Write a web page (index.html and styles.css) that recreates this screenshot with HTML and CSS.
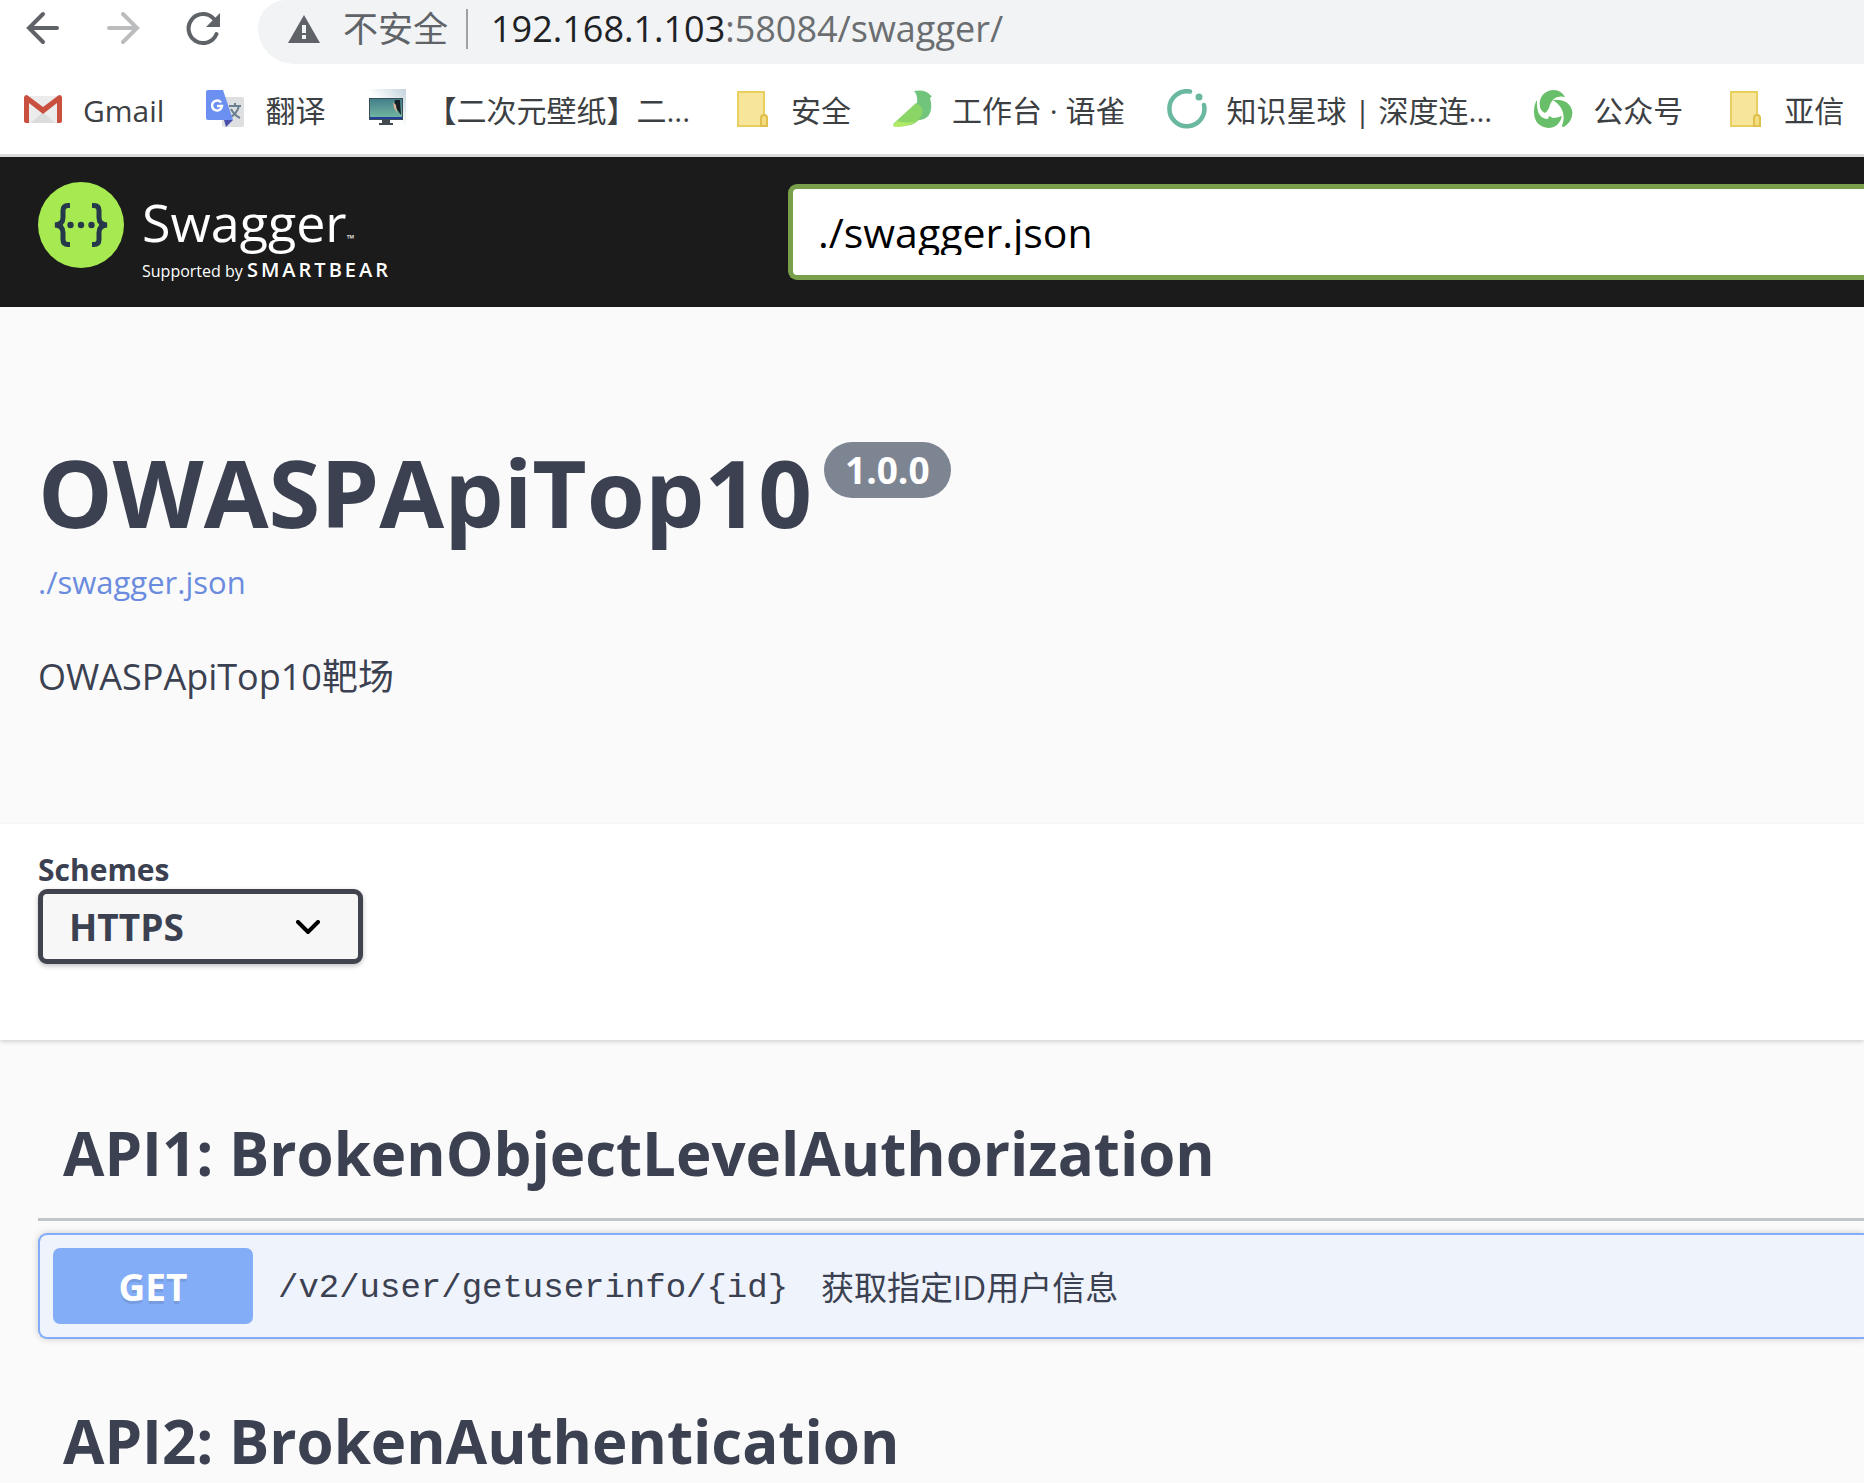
FILE: index.html
```html
<!DOCTYPE html>
<html lang="zh-CN">
<head>
<meta charset="utf-8">
<title>Swagger UI</title>
<meta name="viewport" content="width=device-width, initial-scale=1">
<link rel="stylesheet" href="styles.css">
</head>
<body>
<header class="browser">
  <div class="toolbar">
    <button class="nav-button" type="button" aria-label="后退">
      <svg viewBox="0 0 36 36"><path d="M32 18H4M18 4L4 18l14 14"/></svg>
    </button>
    <button class="nav-button nav-button-off" type="button" aria-label="前进">
      <svg viewBox="0 0 36 36"><path d="M4 18h28M18 4l14 14-14 14"/></svg>
    </button>
    <button class="nav-button" type="button" aria-label="刷新">
      <svg viewBox="0 0 36 36"><path d="M31.500 24A14.500 14.500 0 1 1 29 9"/><path class="solid" d="M35 3v14H21z"/></svg>
    </button>
    <div class="address">
      <svg class="warning" viewBox="0 0 32 28"><path fill="#5f6368" d="M16 0l16 28H0z"/><path fill="#f1f3f4" d="M14 10h4v8h-4zM14 20h4v4h-4z"/></svg>
      <span class="insecure">不安全</span>
      <span class="url"><span class="host">192.168.1.103</span>:58084/swagger/</span>
    </div>
  </div>
  <nav class="bookmarks" aria-label="书签">
    <a href="#gmail">
      <svg viewBox="0 0 40 40"><path fill="#ececec" d="M3 7h34v27H3z"/><path fill="#dcdcdc" d="M8 34l12-11 12 11z"/><path fill="#c9503f" d="M1 9q0-3 3-3l16 12L36 6q3 0 3 3v23q0 2-2 2h-3V14L20 25 6 14v20H3q-2 0-2-2z"/></svg>
      <span>Gmail</span>
    </a>
    <a href="#translate">
      <svg viewBox="0 0 40 40"><rect x="17" y="8" width="22" height="30" rx="2" fill="#dedfe1"/><path d="M24 17h12M30 14v3M34 17q-2 8-10 12M26 20q3 6 9 9" fill="none" stroke="#6a7f90" stroke-width="2"/><path fill="#4751ad" d="M19 31h9l-7 7z"/><path fill="#6b90f2" d="M3 1h15l10 30H3q-2 0-2-2V3q0-2 2-2z"/><path d="M16 13.500A5 5 0 1 0 17 17h-5" fill="none" stroke="#fff" stroke-width="2.500"/></svg>
      <span>翻译</span>
    </a>
    <a href="#wallpaper">
      <svg viewBox="0 0 40 40"><defs><linearGradient id="sky" x1="0" x2="1" y1="1" y2="0"><stop offset=".5" stop-color="#fff"/><stop offset="1" stop-color="#c3d3dc"/></linearGradient><linearGradient id="sea" x2="0" y2="1"><stop stop-color="#427f8a"/><stop offset="1" stop-color="#70b4a0"/></linearGradient></defs><path fill="url(#sky)" d="M0 0h40v40H0z"/><path fill="#3b4d58" d="M3 9h34v22H3z"/><path fill="url(#sea)" d="M4 10h32v18H4z"/><path fill="#233d9b" d="M4 28h32v2H4z"/><path fill="#172027" d="M29 11h5l1 15-5-7-2-3z"/><path fill="#d6b59b" d="M27 13l3 3 1 8-3-5z"/><path fill="#444b50" d="M16 31h8v3h3v2H13v-2h3z"/></svg>
      <span>【二次元壁纸】二...</span>
    </a>
    <a href="#security">
      <svg viewBox="0 0 40 40"><path d="M7 3h26v23q3 0 3 4v7H7z" fill="#f7e59b" stroke="#e9cf60" stroke-width="2"/><path d="M30 37v-8q0-3 3-3t3 3v8z" fill="#f4dc80" stroke="#e0c04c" stroke-width="2"/></svg>
      <span>安全</span>
    </a>
    <a href="#yuque">
      <svg viewBox="0 0 40 40"><path fill="#70c47b" d="M22 2q12-2 16 4l2 1-2 2q3 10-1 17-4 6-14 5l-6-9 8-8q1-8-3-12z"/><path fill="#8ad565" d="M24 14q9 4 6 12-6 12-20 11l-9-2z"/><path fill="#b3e969" d="M1 36l4-4q10 3 19 0-9 6-19 6-4 0-4-2z"/></svg>
      <span>工作台 · 语雀</span>
    </a>
    <a href="#zsxq">
      <svg viewBox="0 0 40 40"><path d="M23 2.500A17.500 17.500 0 1 0 37 16" fill="none" stroke="#6bb8a0" stroke-width="4.500" stroke-linecap="round"/><circle cx="32" cy="8" r="3.500" fill="#6bb8a0"/></svg>
      <span>知识星球 | 深度连...</span>
    </a>
    <a href="#mp">
      <svg viewBox="0 0 40 40"><path fill="#69bf69" d="M7 18C5 8 12 1 21 1q7 0 11 7-13-3-16 11-2 4-4 5-4-2-5-6z"/><path fill="#69bf69" d="M20 11q15-2 19 10 2 10-8 17-2 0-2-1 6-16-9-26z"/><path fill="#69bf69" d="M4 11q-1 19 11 19l1-3 4 2q4 0 9-2-3 12-14 12Q1 37 1 23 1 15 4 11z"/></svg>
      <span>公众号</span>
    </a>
    <a href="#asiainfo">
      <svg viewBox="0 0 40 40"><path d="M7 3h26v23q3 0 3 4v7H7z" fill="#f7e59b" stroke="#e9cf60" stroke-width="2"/><path d="M30 37v-8q0-3 3-3t3 3v8z" fill="#f4dc80" stroke="#e0c04c" stroke-width="2"/></svg>
      <span>亚信</span>
    </a>
  </nav>
</header>

<div class="topbar">
  <a class="brand" href="#top">
    <svg class="brand-mark" viewBox="0 0 86 86"><circle cx="43" cy="43" r="43" fill="#a7e951"/><g fill="none" stroke="#25394a" stroke-width="5"><path d="M32 23.500h-2q-5 0-5 5v7q0 7-8 7.500 8 .5 8 7.500v7q0 5 5 5h2"/><path d="M54 23.500h2q5 0 5 5v7q0 7 8 7.500-8 .5-8 7.500v7q0 5-5 5h-2"/></g><g fill="#25394a"><circle cx="32.500" cy="43" r="3.200"/><circle cx="43" cy="43" r="3.200"/><circle cx="53.500" cy="43" r="3.200"/></g></svg>
    <span class="brand-text">
      <span class="brand-name">Swagger<small>™</small></span>
      <span class="brand-sub">Supported by <b>SMARTBEAR</b></span>
    </span>
  </a>
  <div class="spec-url">
    <input type="text" value="./swagger.json" aria-label="Specification URL">
  </div>
</div>

<main>
  <section class="info">
    <h1 class="title">OWASPApiTop10 <span class="version">1.0.0</span></h1>
    <a class="spec-link" href="./swagger.json">./swagger.json</a>
    <p class="description">OWASPApiTop10靶场</p>
  </section>

  <section class="schemes">
    <label for="scheme">Schemes</label>
    <div class="select">
      <select id="scheme"><option>HTTPS</option></select>
      <svg viewBox="0 0 24 14"><path d="M2 2l10 10L22 2" fill="none" stroke="#000" stroke-width="4" stroke-linecap="round"/></svg>
    </div>
  </section>

  <section class="tag">
    <h2>API1: BrokenObjectLevelAuthorization</h2>
    <div class="operation">
      <button class="method" type="button">GET</button>
      <span class="path">/v2/user/getuserinfo/{id}</span>
      <span class="summary">获取指定ID用户信息</span>
    </div>
  </section>
  <section class="tag">
    <h2>API2: BrokenAuthentication</h2>
  </section>
</main>
</body>
</html>
```

FILE: styles.css
```css
* { box-sizing: border-box; }

body {
  margin: 0;
  height: 100vh;
  overflow: hidden;
  background: #fafafa;
  color: #3b4151;
  font-family: "Open Sans", "Noto Sans CJK SC", sans-serif;
}

a { text-decoration: none; }

h1, h2, p { margin: 0; }

/* Browser chrome */
.browser {
  background: #fff;
  border-bottom: 3px solid #dadbdd;
}

.toolbar {
  display: flex;
  align-items: flex-start;
  gap: 44px;
  padding-left: 25px;
  height: 64px;
}

.nav-button {
  width: 36px;
  height: 36px;
  margin-top: 10px;
  padding: 0;
  border: 0;
  background: none;
}

.nav-button svg { display: block; }

.nav-button path {
  fill: none;
  stroke: #5f6368;
  stroke-width: 4;
  stroke-linecap: round;
}

.nav-button .solid {
  fill: #5f6368;
  stroke: none;
}

.nav-button-off path { stroke: #babcbe; }

.address {
  display: flex;
  flex: 1;
  align-items: center;
  height: 64px;
  margin-left: -7px;
  padding: 0 0 6px 30px;
  border-radius: 28px 0 0 36px;
  background: #f1f3f4;
  color: #6b6e71;
  font-size: 36px;
  line-height: 40px;
}

.warning {
  width: 32px;
  height: 28px;
  margin-right: 23px;
}

.insecure {
  padding-right: 18px;
  border-right: 2px solid #9fa2a5;
  color: #5f6368;
  font-size: 35px;
}

.url { padding-left: 23px; }

.host { color: #202124; }

.bookmarks {
  display: flex;
  gap: 41px;
  height: 90px;
  padding: 25px 0 0 23px;
  overflow: hidden;
}

.bookmarks a {
  display: flex;
  flex: none;
  gap: 20px;
  color: #3c4043;
  font-size: 30px;
  line-height: 44px;
  white-space: nowrap;
}

.bookmarks svg {
  width: 40px;
  height: 40px;
}

/* Swagger top bar */
.topbar {
  display: flex;
  align-items: flex-start;
  height: 150px;
  padding: 25px 0 0 38px;
  background: #1b1b1b;
}

.brand {
  display: flex;
  flex: 0 0 750px;
  gap: 18px;
  color: #fff;
}

.brand-mark {
  width: 86px;
  height: 86px;
}

.brand-text {
  display: flex;
  flex-direction: column;
  gap: 7px;
  padding-top: 10px;
}

.brand-name {
  font-size: 52px;
  line-height: 60px;
}

.brand-name small {
  font-size: 10px;
  line-height: 10px;
}

.brand-sub {
  font-size: 16px;
  line-height: 24px;
}

.brand-sub b {
  font-size: 20px;
  font-weight: 600;
  letter-spacing: 3px;
  line-height: 20px;
}

.spec-url {
  flex: 1;
  min-width: 0;
  height: 96px;
  margin-top: 2px;
  padding: 20px 0 20px 25px;
  border: 5px solid #7a9f4b;
  border-right: 0;
  border-radius: 9px 0 0 9px;
  background: #fff;
}

.spec-url input {
  display: block;
  width: 100%;
  height: 46px;
  padding: 0;
  border: 0;
  outline: 0;
  overflow: hidden;
  background: none;
  color: #000;
  font: 41px/46px "Open Sans", sans-serif;
  contain: paint;
}

/* API description */
.info {
  padding: 135px 38px 122px;
}

.title {
  display: flex;
  align-items: flex-start;
  gap: 12px;
  font-size: 94px;
  line-height: 100px;
}

.version {
  padding: 0 21px;
  border-radius: 28px;
  background: #7d8492;
  color: #fff;
  font-size: 37px;
  line-height: 56px;
}

.spec-link {
  display: block;
  margin-top: 20px;
  color: #6b8cde;
  font-size: 31px;
  line-height: 40px;
}

.description {
  margin-top: 50px;
  font-size: 36px;
  line-height: 50px;
}

.schemes {
  padding: 26px 38px 76px;
  background: #fff;
  box-shadow: 0 2px 4px rgba(0, 0, 0, .15);
}

.schemes label {
  display: block;
  font-size: 30px;
  font-weight: 700;
  line-height: 39px;
}

.select {
  display: grid;
  align-items: center;
  width: 325px;
}

.select select, .select svg { grid-area: 1 / 1; }

.select select {
  height: 75px;
  padding: 0 26px;
  border: 5px solid #41444e;
  border-radius: 9px;
  appearance: none;
  background: #f7f7f7;
  box-shadow: 0 2px 5px rgba(0, 0, 0, .25);
  color: #3b4151;
  font: 700 37px "Open Sans", sans-serif;
}

.select svg {
  justify-self: end;
  width: 24px;
  height: 14px;
  margin-right: 43px;
  pointer-events: none;
}

/* Operations */
.tag { padding: 62px 0 0 38px; }

.schemes + .tag { padding-top: 73px; }

.tag h2 {
  padding: 0 25px 25px;
  border-bottom: 3px solid #c1c4c9;
  font-size: 60px;
  line-height: 80px;
}

.operation {
  display: flex;
  align-items: center;
  height: 106px;
  margin-top: 12px;
  padding-left: 13px;
  border: 2px solid #82abf8;
  border-right: 0;
  border-radius: 9px 0 0 9px;
  background: #eff3fb;
  box-shadow: 0 0 7px rgba(0, 0, 0, .19);
}

.method {
  width: 200px;
  height: 76px;
  border: 0;
  border-radius: 7px;
  background: #84adf8;
  color: #fff;
  font: 700 37px "Open Sans", sans-serif;
  text-shadow: 0 3px 0 rgba(0, 0, 0, .1);
}

.path, .summary { padding-top: 3px; }

.path {
  margin-left: 25px;
  font: 34px/50px "Liberation Mono", monospace;
}

.summary {
  margin-left: 33px;
  font-size: 33px;
  line-height: 50px;
}
```
